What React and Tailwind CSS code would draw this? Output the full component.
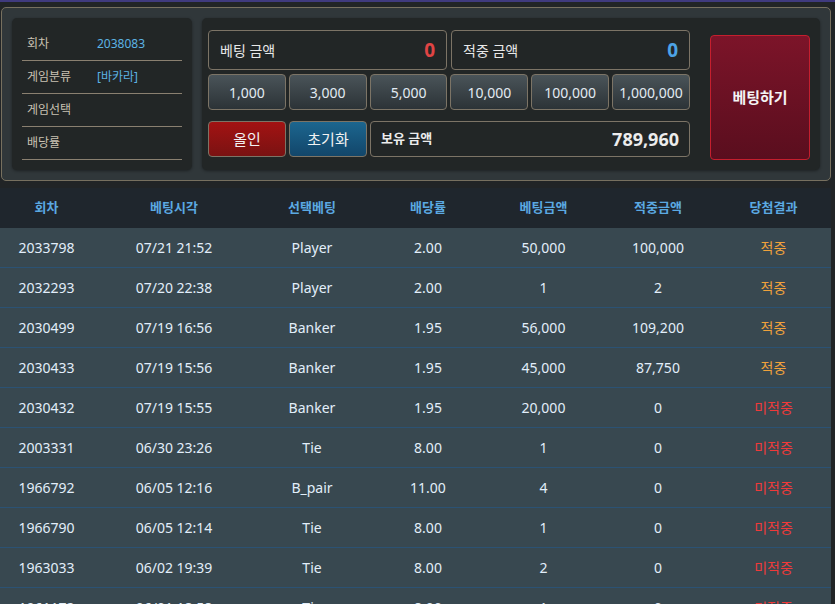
import { useState } from "react"

const rows = [
  ["2033798", "07/21 21:52", "Player", "2.00", "50,000", "100,000", true],
  ["2032293", "07/20 22:38", "Player", "2.00", "1", "2", true],
  ["2030499", "07/19 16:56", "Banker", "1.95", "56,000", "109,200", true],
  ["2030433", "07/19 15:56", "Banker", "1.95", "45,000", "87,750", true],
  ["2030432", "07/19 15:55", "Banker", "1.95", "20,000", "0", false],
  ["2003331", "06/30 23:26", "Tie", "8.00", "1", "0", false],
  ["1966792", "06/05 12:16", "B_pair", "11.00", "4", "0", false],
  ["1966790", "06/05 12:14", "Tie", "8.00", "1", "0", false],
  ["1963033", "06/02 19:39", "Tie", "8.00", "2", "0", false],
  ["1961172", "06/01 18:58", "Tie", "8.00", "1", "0", false],
]

const chips = ["1,000", "3,000", "5,000", "10,000", "100,000", "1,000,000"]
const cols = "grid grid-cols-[93px_162px_114px_118px_113px_116px_115px]"

export default function App() {
  const [betAmount, setBetAmount] = useState(0)

  return (
    <div
      className="min-h-screen w-[835px] h-[604px] overflow-hidden bg-[#212426] border-t-2 border-[#3f3a7e]"
      style={{ fontFamily: '"Noto Sans", "Noto Sans CJK KR", sans-serif' }}
    >
      <div className="pt-[5px] pl-px pr-1">
        <div className="flex gap-[10px] h-[174px] rounded-[5px] border border-[#77705f] bg-[#30373a] p-[10px]">
          <div className="w-[180px] rounded-[5px] bg-[#222626] px-[10px] pt-[10px] shadow-[0_1px_3px_rgba(0,0,0,0.4)]">
            {[
              ["회차", "2038083"],
              ["게임분류", "[바카라]"],
              ["게임선택", ""],
              ["배당률", ""],
            ].map(([label, value]) => (
              <div
                key={label}
                className="flex items-center h-[33px] border-b border-[#8a8070] text-[12px]"
              >
                <span className="w-[75px] pl-[5px] text-[#c9c2b3]">{label}</span>
                <span className="text-[#5cb3e4]">{value}</span>
              </div>
            ))}
          </div>

          <div className="flex-1 flex rounded-[5px] bg-[#222626] px-[6px] pt-[12px] shadow-[0_1px_3px_rgba(0,0,0,0.4)]">
            <div className="w-[482px] flex flex-col">
              <div className="flex gap-[4px]">
                <div className="flex-1 h-[40px] flex items-center justify-between rounded-[4px] border border-[#7c7466] px-[11px]">
                  <span className="text-[14px] text-[#e8e8e8]">베팅 금액</span>
                  <span className="text-[19px] font-bold text-[#e04444]">{betAmount}</span>
                </div>
                <div className="flex-1 h-[40px] flex items-center justify-between rounded-[4px] border border-[#7c7466] px-[11px]">
                  <span className="text-[14px] text-[#e8e8e8]">적중 금액</span>
                  <span className="text-[19px] font-bold text-[#4da3e6]">0</span>
                </div>
              </div>

              <div className="flex gap-[3px] mt-[4px]">
                {chips.map((c) => (
                  <button
                    key={c}
                    className="flex-1 h-[36px] rounded-[4px] border border-[#7c7466] bg-gradient-to-b from-[#4a5459] to-[#2c3337] text-[14px] text-[#e2eaf2]"
                  >
                    {c}
                  </button>
                ))}
              </div>

              <div className="flex gap-[3px] mt-[11px]">
                <button
                  onClick={() => setBetAmount(0)}
                  className="w-[78px] h-[36px] rounded-[4px] border border-[#7c7466] bg-gradient-to-b from-[#a31212] to-[#7a1212] text-[15px] text-[#f2f2f2]"
                >
                  올인
                </button>
                <button
                  onClick={() => setBetAmount(0)}
                  className="w-[78px] h-[36px] rounded-[4px] border border-[#7c7466] bg-gradient-to-b from-[#1c668f] to-[#12466a] text-[15px] text-[#f2f2f2]"
                >
                  초기화
                </button>
                <div className="flex-1 h-[36px] flex items-center justify-between rounded-[4px] border border-[#7c7466] pl-[10px] pr-[10px]">
                  <span className="text-[13px] font-bold text-[#ececec]">보유 금액</span>
                  <span className="text-[18px] font-bold text-[#ececec]">789,960</span>
                </div>
              </div>
            </div>

            <button className="ml-[20px] mt-[5px] w-[100px] h-[125px] rounded-[4px] border border-[#c51f2e] bg-gradient-to-b from-[#7c1429] to-[#5a0e1e] text-[15px] font-bold text-[#f4f4f4]">
              베팅하기
            </button>
          </div>
        </div>
      </div>

      <div className="mt-[7px] w-[831px]">
        <div className={`${cols} h-[40px] items-center bg-[#1f262d] text-[13px] font-bold text-[#5ba9e2]`}>
          {["회차", "베팅시각", "선택베팅", "배당률", "베팅금액", "적중금액", "당첨결과"].map((h) => (
            <div key={h} className="text-center">{h}</div>
          ))}
        </div>
        {rows.map((r) => (
          <div
            key={r[0]}
            className={`${cols} h-[40px] items-center bg-[#384850] border-b border-[#2b5274] text-[14px] text-[#e2eefa]`}
          >
            {r.slice(0, 6).map((v, i) => (
              <div key={i} className="text-center">{v}</div>
            ))}
            <div className={r[6] ? "text-center text-[#f0a23c]" : "text-center text-[#ee3a3a]"}>
              {r[6] ? "적중" : "미적중"}
            </div>
          </div>
        ))}
      </div>
    </div>
  )
}
